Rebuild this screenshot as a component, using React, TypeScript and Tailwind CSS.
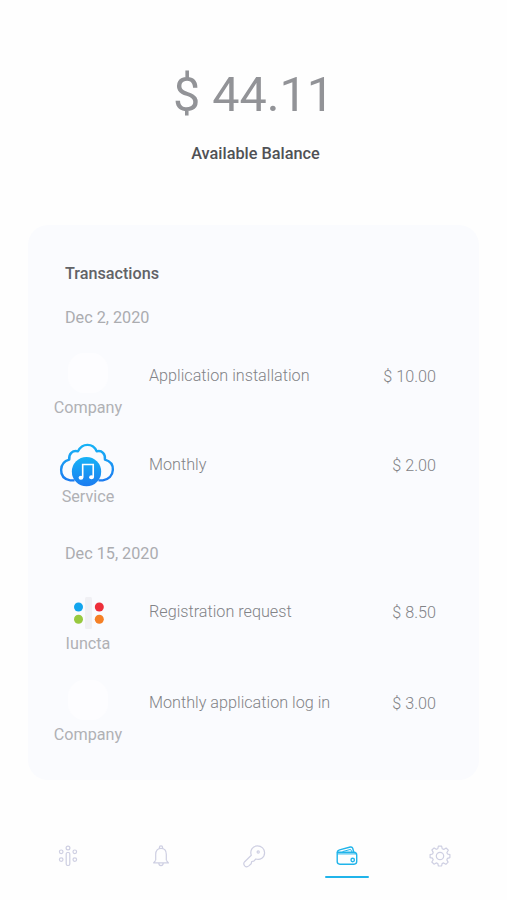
import type { ReactNode } from 'react';

interface Transaction {
  company: string;
  logo: ReactNode;
  description: string;
  amount: string;
}

interface TransactionGroup {
  date: string;
  items: Transaction[];
}

const BlankLogo = () => <div className="h-10 w-10 rounded-2xl bg-[#fdfdff]" />;

const CloudMusicLogo = () => (
  <svg className="mt-1.5 mr-0.5" width="58" height="46" viewBox="0 0 60 48" fill="none">
    <defs>
      <linearGradient id="cloud" x1="0" y1="0" x2="0" y2="1">
        <stop offset="0" stopColor="#16b2f6" />
        <stop offset="1" stopColor="#1c7cf0" />
      </linearGradient>
    </defs>
    <path
      d="M17 40H12.500C6.500 39 2.800 35 3 29C3.200 23.500 6.300 19.700 11.500 18.400C10.700 12.300 14.800 8.300 20.600 9.700C22.900 5 26.400 3 30.500 3C35 3 38.300 5.300 40.100 9.700C45.500 8.300 49.500 12.400 48.700 18.300C54 19.700 57.200 23.700 57 29C56.800 35 52.500 39 46.500 40H42"
      stroke="url(#cloud)"
      strokeWidth="2.500"
      strokeLinejoin="round"
    />
    <circle cx="29.500" cy="31" r="15.300" fill="url(#cloud)" />
    <path d="M25.500 37V23.500H36.500V36.500" stroke="white" strokeWidth="1.700" />
    <ellipse cx="23.700" cy="37.300" rx="2.500" ry="2" fill="white" />
    <ellipse cx="34.700" cy="36.800" rx="2.500" ry="2" fill="white" />
  </svg>
);

const IunctaLogo = () => (
  <svg className="ml-0.5 mt-2" width="44" height="44" viewBox="0 0 44 44">
    <rect x="18" y="6" width="7" height="32" rx="1.500" fill="#f0f0f4" />
    <circle cx="11.500" cy="16" r="4.500" fill="#12a5ee" />
    <circle cx="32.300" cy="16" r="4.500" fill="#ed2f3a" />
    <circle cx="11.500" cy="28.200" r="4.500" fill="#98c93f" />
    <circle cx="32.300" cy="28.200" r="4.500" fill="#f58026" />
  </svg>
);

const groups: TransactionGroup[] = [
  {
    date: 'Dec 2, 2020',
    items: [
      { company: 'Company', logo: <BlankLogo />, description: 'Application installation', amount: '$ 10.00' },
      { company: 'Service', logo: <CloudMusicLogo />, description: 'Monthly', amount: '$ 2.00' },
    ],
  },
  {
    date: 'Dec 15, 2020',
    items: [
      { company: 'Iuncta', logo: <IunctaLogo />, description: 'Registration request', amount: '$ 8.50' },
      { company: 'Company', logo: <BlankLogo />, description: 'Monthly application log in', amount: '$ 3.00' },
    ],
  },
];

const HomeIcon = () => (
  <svg width="22" height="22" viewBox="0 0 22 22" fill="none" stroke="currentColor" strokeWidth="1.200">
    <circle cx="11" cy="3" r="1.900" />
    <circle cx="4.200" cy="6.800" r="1.800" />
    <circle cx="17.800" cy="6.800" r="1.800" />
    <circle cx="4.200" cy="14.600" r="1.800" />
    <circle cx="17.800" cy="14.600" r="1.800" />
    <rect x="9.200" y="7.500" width="3.600" height="13" rx="1.400" />
  </svg>
);

const BellIcon = () => (
  <svg width="22" height="22" viewBox="0 0 22 22" fill="none" stroke="currentColor" strokeWidth="1.200" strokeLinejoin="round">
    <path d="M9.400 3.300V2.400a1.600 1.600 0 0 1 3.200 0v.9" />
    <path d="M5.700 15.300V9.200C5.700 5.600 7.900 3.300 11 3.300s5.300 2.300 5.300 5.900v6.100" />
    <path d="M5.700 15.300 3.600 17.900h14.800l-2.100-2.600" />
    <path d="M8.800 18c.1 1.800 1 2.700 2.200 2.700s2.100-.9 2.200-2.700" />
  </svg>
);

const KeyIcon = () => (
  <svg width="24" height="24" viewBox="0 0 24 24" fill="none" stroke="currentColor" strokeWidth="1.200" strokeLinejoin="round">
    <path d="M9.300 11.200C7.500 6.100 11 1.900 15.400 1.900c4.200 0 7.200 3.100 7.200 6.900 0 4.700-4.300 7.700-8.800 6.200l-2 2.200-2.100.3-.5 2.200-2.400 2.200c-1.200 1-3 1-4.100-.1-1.100-1.200-1.100-2.900 0-4.100z" />
    <circle cx="16.200" cy="8" r="1.100" />
  </svg>
);

const WalletIcon = () => (
  <svg width="22" height="20" viewBox="0 0 22 20" fill="none" stroke="currentColor" strokeWidth="1.400" strokeLinejoin="round">
    <path d="M1.200 6.200h16.600c1.800 0 2.900 1 2.900 2.800v6.600c0 1.700-1 2.600-2.700 2.600H3.900c-1.700 0-2.700-.9-2.700-2.600z" />
    <path d="M1.300 6.200c.1-1.300.9-1.900 2.300-2.300l10.700-2.900c1.300-.3 2 .1 2.400 1.300l1.100 3.900" />
    <path d="M6.500 5.600 14.600 3.400l1.500 2.700M1.400 7.900h18.500" strokeWidth="1" />
    <circle cx="16.700" cy="14" r="1.700" />
  </svg>
);

const SettingsIcon = () => (
  <svg width="22" height="22" viewBox="0 0 22 22" fill="none" stroke="currentColor" strokeWidth="1.200" strokeLinejoin="round">
    <path d="M9.400 1.200h3.200l.6 2.500 1.600.7 2.300-1.400 2.200 2.200-1.400 2.300.6 1.500 2.400.6v3l-2.400.7-.7 1.600 1.300 2.200-2.200 2.200-2.300-1.400-1.500.7-.5 2.400H9.400l-.6-2.500-1.600-.6-2.200 1.300-2.200-2.200 1.400-2.300-.7-1.500-2.400-.6v-3l2.500-.6.6-1.600L2.900 5l2.200-2.100 2.200 1.400 1.500-.6z" />
    <circle cx="11" cy="11" r="3.700" />
  </svg>
);

const tabs = [
  { name: 'Home', icon: <HomeIcon /> },
  { name: 'Notifications', icon: <BellIcon /> },
  { name: 'Keys', icon: <KeyIcon /> },
  { name: 'Wallet', icon: <WalletIcon />, active: true },
  { name: 'Settings', icon: <SettingsIcon /> },
];

const TransactionRow = ({ company, logo, description, amount }: Transaction) => (
  <li className="flex h-[71px]">
    <div className="flex w-[76px] shrink-0 flex-col items-center">
      <div className="flex h-[47px] items-center justify-center">{logo}</div>
      <span className="leading-6 text-[#b0b1b5]">{company}</span>
    </div>
    <p className="ml-[23px] mt-[15px] flex-1 font-light leading-6 text-[#828387]">{description}</p>
    <p className="mt-4 font-light leading-6 text-[#828387]">{amount}</p>
  </li>
);

export default function App() {
  return (
    <div className="flex h-[900px] w-[507px] flex-col bg-[#fefefe] font-['Roboto',sans-serif] text-[16.2px]">
      <header className="flex h-[225px] flex-col items-center pt-16">
        <h1 className="text-[48.5px] leading-[62px] text-[#929397]">$ 44.11</h1>
        <p className="ml-1 mt-4 text-[16.3px] font-medium leading-6 text-[#505155]">Available Balance</p>
      </header>

      <main className="mx-7 h-[555px] rounded-[20px] bg-[#fafbfe] pl-[22px] pr-[43px] pt-[37px]">
        <h2 className="pl-[15px] font-medium leading-6 text-[#626367]">Transactions</h2>
        <div className="mt-5 flex flex-col gap-[33px]">
          {groups.map((group, i) => (
            <section key={group.date}>
              <h3 className="pl-[15px] leading-6 text-[#abacb0]">{group.date}</h3>
              <ul className={i === 0 ? 'mt-[19px] flex flex-col gap-[18px]' : 'mt-[19px] flex flex-col gap-5'}>
                {group.items.map((item) => (
                  <TransactionRow key={item.description} {...item} />
                ))}
              </ul>
            </section>
          ))}
        </div>
      </main>

      <nav className="mt-[60px] grid grid-cols-5 px-[21px]">
        {tabs.map((tab) => (
          <button
            key={tab.name}
            aria-label={tab.name}
            className={tab.active ? 'flex flex-col items-center text-[#20b4ea]' : 'flex flex-col items-center text-[#cecfe2]'}
          >
            <span className="flex h-8 items-center justify-center">{tab.icon}</span>
            {tab.active && <span className="mt-[4px] h-[2px] w-11 rounded-full bg-[#20b4ea]" />}
          </button>
        ))}
      </nav>
    </div>
  );
}
